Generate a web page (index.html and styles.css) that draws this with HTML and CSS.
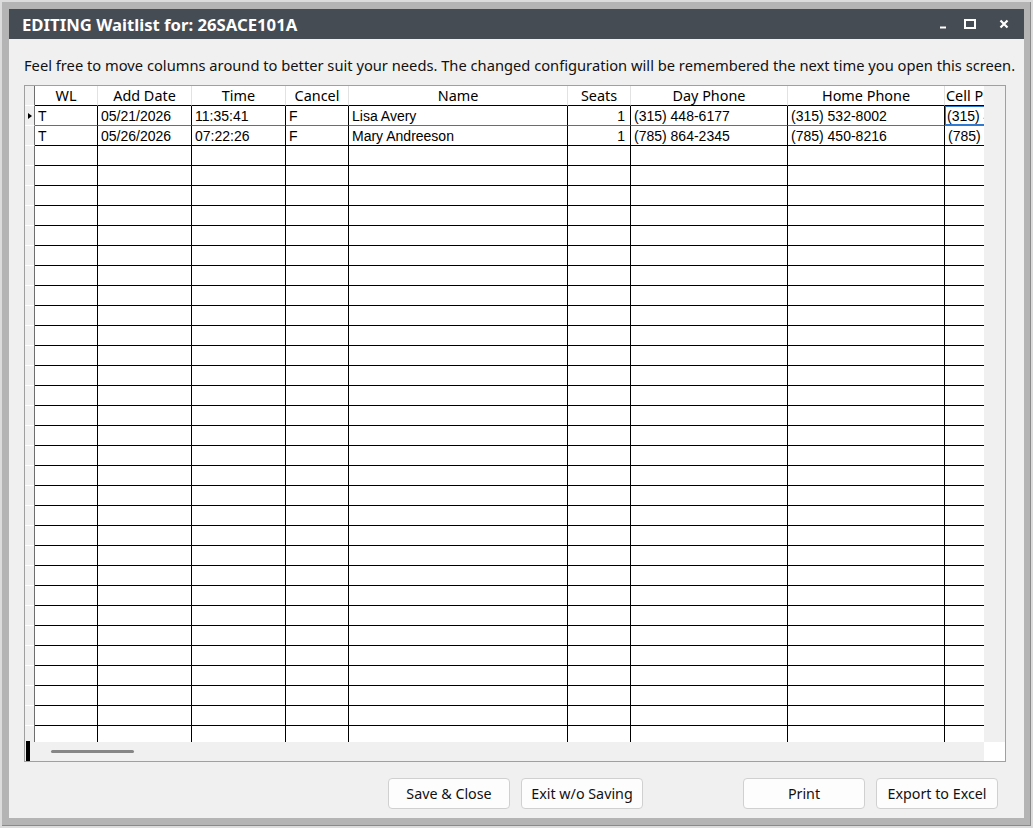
FILE: index.html
```html
<!DOCTYPE html>
<html lang="en">
<head>
    <meta charset="UTF-8">
    <title>EDITING Waitlist for: 26SACE101A</title>
    <link rel="stylesheet" href="styles.css">
</head>
<body>
<div class="frame">
    <div class="window">
        <div class="titlebar">
            <span class="title">EDITING Waitlist for: 26SACE101A</span>
            <div class="controls">
                <span class="ctl min"><svg width="6" height="10" viewBox="0 0 6 10"><rect x="0" y="7.5" width="6" height="2" fill="#fff"/></svg></span>
                <span class="ctl max"><svg width="12" height="10" viewBox="0 0 12 10"><rect x="1" y="1" width="10" height="8" fill="none" stroke="#fff" stroke-width="2"/></svg></span>
                <span class="ctl close"><svg width="10" height="10" viewBox="0 0 10 10"><path d="M1.5 1.5 L8.5 8.5 M8.5 1.5 L1.5 8.5" stroke="#fff" stroke-width="2.2"/></svg></span>
            </div>
        </div>

        <div class="content">
            <p class="hint">Feel free to move columns around to better suit your needs. The changed configuration will be remembered the next time you open this screen.</p>

            <div class="grid">
                <div class="view">
                    <div class="rows">
                        <div class="row head">
                            <div class="cell c0"></div>
                            <div class="cell c1">WL</div>
                            <div class="cell c2">Add Date</div>
                            <div class="cell c3">Time</div>
                            <div class="cell c4">Cancel</div>
                            <div class="cell c5">Name</div>
                            <div class="cell c6">Seats</div>
                            <div class="cell c7">Day Phone</div>
                            <div class="cell c8">Home Phone</div>
                            <div class="cell c9">Cell Phone</div>
                        </div>
                        <div class="row sel">
                            <div class="cell c0"><span class="pointer"></span></div>
                            <div class="cell c1">T</div>
                            <div class="cell c2">05/21/2026</div>
                            <div class="cell c3">11:35:41</div>
                            <div class="cell c4">F</div>
                            <div class="cell c5">Lisa Avery</div>
                            <div class="cell c6 num">1</div>
                            <div class="cell c7">(315) 448-6177</div>
                            <div class="cell c8">(315) 532-8002</div>
                            <div class="cell c9 focus">(315) 448-6177</div>
                        </div>
                        <div class="row">
                            <div class="cell c0"></div>
                            <div class="cell c1">T</div>
                            <div class="cell c2">05/26/2026</div>
                            <div class="cell c3">07:22:26</div>
                            <div class="cell c4">F</div>
                            <div class="cell c5">Mary Andreeson</div>
                            <div class="cell c6 num">1</div>
                            <div class="cell c7">(785) 864-2345</div>
                            <div class="cell c8">(785) 450-8216</div>
                            <div class="cell c9">(785) 864-2345</div>
                        </div>
                        <!-- empty rows, lines drawn by background -->
                        <div class="row filler">
                            <div class="cell c0"></div>
                            <div class="cell c1"></div>
                            <div class="cell c2"></div>
                            <div class="cell c3"></div>
                            <div class="cell c4"></div>
                            <div class="cell c5"></div>
                            <div class="cell c6"></div>
                            <div class="cell c7"></div>
                            <div class="cell c8"></div>
                            <div class="cell c9"></div>
                        </div>
                    </div>
                    <div class="vgutter"></div>
                </div>
                <div class="hscroll">
                    <span class="mark"></span>
                    <span class="thumb"></span>
                    <span class="corner"></span>
                </div>
            </div>

            <div class="buttons">
                <button type="button">Save &amp; Close</button>
                <button type="button">Exit w/o Saving</button>
                <button type="button" class="push">Print</button>
                <button type="button">Export to Excel</button>
            </div>
        </div>
    </div>
</div>
</body>
</html>
```

FILE: styles.css
```css
html, body {
    margin: 0;
    padding: 0;
}
body {
    font-family: "Noto Sans", "Open Sans", sans-serif;
    color: #000;
}
.frame {
    width: 1033px;
    height: 828px;
    box-sizing: border-box;
    padding: 7px;
    background-color: #b4b4b4;
    border: 2px solid #dcdcdc;
    box-shadow: inset -1px -1px 0 #8a8a8a;
}
.window {
    height: 809px;
    background-color: #f0f0f0;
    display: flex;
    flex-direction: column;
}
.titlebar {
    height: 30px;
    background-color: #454c54;
    display: flex;
    align-items: center;
    padding-left: 13px;
}
.title {
    color: #fff;
    font-weight: 700;
    font-size: 16.7px;
}
.controls {
    margin-left: auto;
    display: flex;
    align-items: center;
    padding-right: 15px;
}
.ctl {
    display: flex;
}
.ctl.max {
    margin-left: 18px;
}
.ctl.close {
    margin-left: 23px;
}
.content {
    padding: 0 18px 0 15px;
}
.hint {
    margin: 16px 0 10px;
    font-size: 14.7px;
    line-height: 20px;
    color: #111;
    white-space: nowrap;
}
.grid {
    border: 1px solid #a0a0a0;
    width: 982px;
    box-sizing: border-box;
}
.view {
    display: flex;
}
.rows {
    width: 960px;
    overflow: hidden;
}
.row {
    display: flex;
    width: 1000px;
    height: 20px;
    font-family: "Liberation Sans", Arial, sans-serif;
    font-size: 14px;
    line-height: 21px;
}
.cell {
    flex: none;
    box-sizing: border-box;
    height: 20px;
    border-right: 1px solid #000;
    border-bottom: 1px solid #000;
    padding: 0 3px;
    white-space: nowrap;
    overflow: hidden;
    background-color: #fff;
}
.c0 { width: 10px; padding: 0; background-color: #f0f0f0; border-bottom-color: #fff; border-right-color: #6e6e6e; }
.c1 { width: 63px; }
.c2 { width: 94px; }
.c3 { width: 94px; }
.c4 { width: 63px; }
.c5 { width: 219px; }
.c6 { width: 63px; }
.c7 { width: 157px; }
.c8 { width: 157px; }
.c9 { width: 80px; }
.num {
    text-align: right;
    padding-right: 5px;
}
.head .cell {
    font-family: "Noto Sans", "Open Sans", sans-serif;
    font-size: 14.4px;
    line-height: 20px;
    text-align: center;
    border-right-color: #e2e2e2;
    padding: 0;
    overflow: visible;
}
.head .c0 {
    border-right-color: #6e6e6e;
}
.head .c9 {
    text-align: left;
    padding-left: 1px;
    overflow: hidden;
}
.sel .cell {
    border-bottom-color: #2f7ad0;
}
.sel .c0 {
    border-bottom-color: #fff;
}
.pointer {
    display: block;
    width: 0;
    height: 0;
    margin: 7px 0 0 3px;
    border-top: 3px solid transparent;
    border-bottom: 3px solid transparent;
    border-left: 4px solid #000;
}
.focus {
    box-shadow: inset 1px 1px 0 #2f7ad0, inset 0 0 0 1px #2f7ad0;
    padding-left: 2px;
}
.filler {
    height: 596px;
}
.filler .cell {
    height: 596px;
    border-bottom: none;
    background: repeating-linear-gradient(to bottom, #fff 0, #fff 19px, #000 19px, #000 20px);
}
.filler .c0 {
    background: repeating-linear-gradient(to bottom, #f0f0f0 0, #f0f0f0 19px, #fff 19px, #fff 20px);
}
.vgutter {
    width: 21px;
    background-color: #f0f0f0;
}
.hscroll {
    height: 19px;
    display: flex;
    background-color: #f0f0f0;
}
.mark {
    width: 4px;
    margin-left: 1px;
    margin-top: -1px;
    height: 20px;
    background-color: #000;
}
.thumb {
    width: 83px;
    height: 3px;
    margin: 8px 0 0 21px;
    border-radius: 2px;
    background-color: #868686;
}
.corner {
    margin-left: auto;
    width: 21px;
    background-color: #fff;
}
.buttons {
    display: flex;
    gap: 11px;
    padding: 16px 0 0 364px;
}
.buttons button {
    width: 122px;
    height: 31px;
    background-color: #fdfdfd;
    border: 1px solid #d0d0d0;
    border-radius: 4px;
    font-family: "Noto Sans", "Open Sans", sans-serif;
    font-size: 14.3px;
    color: #111;
    padding: 0;
}
.buttons .push {
    margin-left: 89px;
}
```
